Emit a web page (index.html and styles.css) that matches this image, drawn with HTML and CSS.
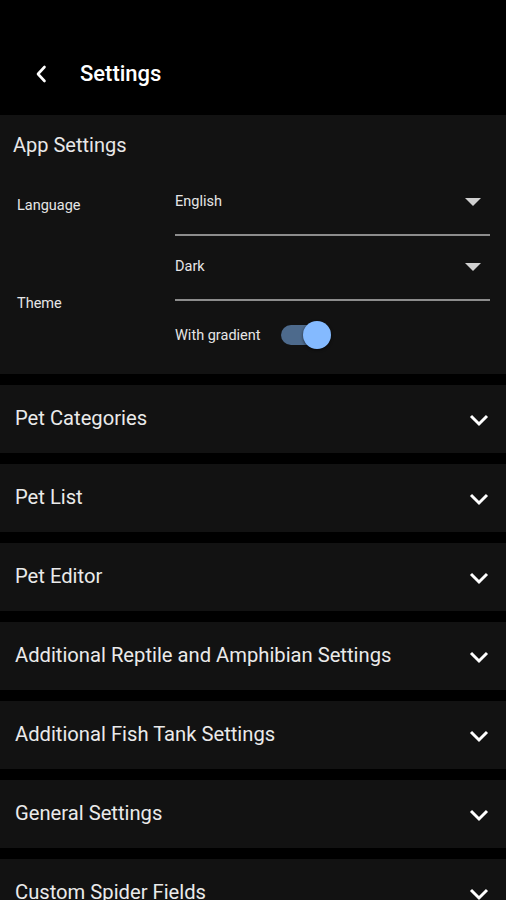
FILE: index.html
```html
<!DOCTYPE html>
<html lang="en">
<head>
  <meta charset="UTF-8">
  <title>Settings</title>
  <link rel="stylesheet" href="styles.css">
</head>
<body>

<div class="topbar">
  <svg class="back" width="12" height="18" viewBox="0 0 12 18">
    <polyline points="9.5,2 3,9 9.5,16" fill="none" stroke="#fff" stroke-width="2.6" stroke-linecap="round" stroke-linejoin="round"/>
  </svg>
  <div class="title">Settings</div>
</div>

<div class="panel app">
  <div class="app-title">App Settings</div>

  <div class="form">
    <div class="label lang">Language</div>
    <div class="select first">
      <span>English</span>
      <span class="caret"></span>
    </div>

    <div class="label theme">Theme</div>
    <div class="theme-box">
      <div class="select second">
        <span>Dark</span>
        <span class="caret"></span>
      </div>
      <div class="switch-row">
        <span>With gradient</span>
        <div class="switch on">
          <div class="thumb"></div>
        </div>
      </div>
    </div>
  </div>
</div>

<div class="panel row"><span>Pet Categories</span><svg class="chev" width="22" height="14" viewBox="0 0 22 14"><polyline points="3,3 11,11 19,3" fill="none" stroke="#fff" stroke-width="3"/></svg></div>
<div class="panel row"><span>Pet List</span><svg class="chev" width="22" height="14" viewBox="0 0 22 14"><polyline points="3,3 11,11 19,3" fill="none" stroke="#fff" stroke-width="3"/></svg></div>
<div class="panel row"><span>Pet Editor</span><svg class="chev" width="22" height="14" viewBox="0 0 22 14"><polyline points="3,3 11,11 19,3" fill="none" stroke="#fff" stroke-width="3"/></svg></div>
<div class="panel row"><span>Additional Reptile and Amphibian Settings</span><svg class="chev" width="22" height="14" viewBox="0 0 22 14"><polyline points="3,3 11,11 19,3" fill="none" stroke="#fff" stroke-width="3"/></svg></div>
<div class="panel row"><span>Additional Fish Tank Settings</span><svg class="chev" width="22" height="14" viewBox="0 0 22 14"><polyline points="3,3 11,11 19,3" fill="none" stroke="#fff" stroke-width="3"/></svg></div>
<div class="panel row"><span>General Settings</span><svg class="chev" width="22" height="14" viewBox="0 0 22 14"><polyline points="3,3 11,11 19,3" fill="none" stroke="#fff" stroke-width="3"/></svg></div>
<div class="panel row"><span>Custom Spider Fields</span><svg class="chev" width="22" height="14" viewBox="0 0 22 14"><polyline points="3,3 11,11 19,3" fill="none" stroke="#fff" stroke-width="3"/></svg></div>

</body>
</html>
```

FILE: styles.css
```css
body {
  background: #000;
  font-family: Roboto, "Noto Sans", sans-serif;
  color: #eee;
  margin: 0;
  padding: 0;
}

.topbar {
  height: 115px;
  box-sizing: border-box;
  padding: 60px 0 0 35px;
  display: flex;
  align-items: flex-start;
}

.back {
  margin-top: 5px;
}

.title {
  margin-left: 33px;
  font-size: 22px;
  font-weight: 500;
  line-height: 28px;
  color: #fff;
}

.panel {
  background-color: #121212;
}

.panel + .panel {
  margin-top: 11px;
}

/* app settings block */

.app {
  height: 259px;
  box-sizing: border-box;
  padding: 18px 16px 0 13px;
}

.app-title {
  font-size: 20px;
  line-height: 24px;
  color: #e8e8e8;
}

.form {
  display: grid;
  grid-template-columns: 162px 1fr;
  font-size: 14.5px;
  color: #e6e6e6;
}

.label {
  padding-left: 4px;
  line-height: 20px;
  align-self: start;
}

.lang {
  padding-top: 39px;
}

.form .theme {
  grid-row: 2;
  grid-column: 1;
  padding-top: 58px;
}

.select {
  display: flex;
  justify-content: space-between;
  align-items: center;
  line-height: 20px;
  padding-bottom: 22px;
  border-bottom: 2px solid #8c8c8c;
}

.select.first {
  padding-top: 35px;
}

.select.second {
  padding-top: 21px;
}

.caret {
  width: 0;
  height: 0;
  margin-right: 9px;
  border-left: 8px solid transparent;
  border-right: 8px solid transparent;
  border-top: 8px solid #d0d0d0;
}

.theme-box {
  grid-row: 2;
  grid-column: 2;
}

.switch-row {
  display: flex;
  align-items: center;
  margin-top: 20px;
  height: 28px;
}

.switch {
  position: relative;
  margin-left: 20px;
  width: 48px;
  height: 20px;
  border-radius: 10px;
  background-color: #4d6a8c;
}

.switch .thumb {
  position: absolute;
  top: -4px;
  right: -2px;
  width: 28px;
  height: 28px;
  border-radius: 50%;
  background-color: #84baff;
  box-shadow: 0 1px 3px rgba(0, 0, 0, 0.6);
}

/* collapsed sections */

.row {
  height: 68px;
  box-sizing: border-box;
  padding: 0 16px 2px 15px;
  display: flex;
  justify-content: space-between;
  align-items: center;
  font-size: 20.2px;
  color: #eaeaea;
}

.chev {
  margin-top: 3px;
}
```
